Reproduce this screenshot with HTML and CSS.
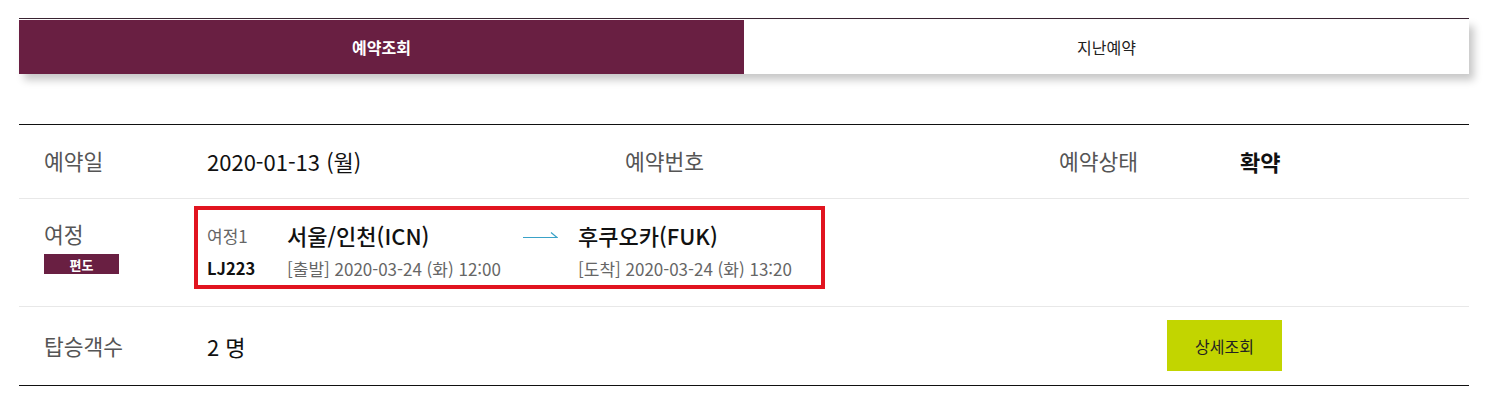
FILE: index.html
```html
<!DOCTYPE html>
<html lang="ko">
<head>
<meta charset="utf-8">
<link rel="stylesheet" href="styles.css">
</head>
<body>
<div class="page">
  <div class="tabs-wrap">
    <div class="tabs">
      <div class="tab active">예약조회</div>
      <div class="tab">지난예약</div>
    </div>
  </div>

  <div class="table">
    <div class="row row-info">
      <div class="label c1">예약일</div>
      <div class="value c2">2020-01-13 (월)</div>
      <div class="label c3">예약번호</div>
      <div class="label c4">예약상태</div>
      <div class="value strong">확약</div>
    </div>

    <div class="row row-trip">
      <div class="trip-label">
        <div class="label">여정</div>
        <div class="badge">편도</div>
      </div>
      <div class="trip-box">
        <div class="seg">여정1</div>
        <div class="city">서울/인천(ICN)</div>
        <div class="arrow">
          <svg width="35" height="10" viewBox="0 0 35 10"><path d="M0 8.5 H34 L28 3.5" fill="none" stroke="#3aa2c8" stroke-width="1.2"/></svg>
        </div>
        <div class="city">후쿠오카(FUK)</div>
        <div class="flight">LJ223</div>
        <div class="time">[출발] 2020-03-24 (화) 12:00</div>
        <div></div>
        <div class="time">[도착] 2020-03-24 (화) 13:20</div>
      </div>
    </div>

    <div class="row row-pax">
      <div class="label c1">탑승객수</div>
      <div class="value">2 명</div>
      <div class="btn">상세조회</div>
    </div>
  </div>
</div>
</body>
</html>
```

FILE: styles.css
```css
* { box-sizing: border-box; }
html, body { margin: 0; padding: 0; background: #fff; }
body {
  font-family: "Noto Sans CJK KR", "Noto Sans", sans-serif;
  color: #111;
  padding-top: 18px;
}
.page { margin-left: 19px; width: 1450px; }

.tabs-wrap {
  border-top: 1px solid #3a2432;
  padding-top: 1px;
}
.tabs {
  display: flex;
  height: 54px;
  box-shadow: 5px 6px 8px rgba(0, 0, 0, 0.22);
}
.tab {
  flex: 1;
  display: flex;
  align-items: center;
  justify-content: center;
  font-size: 16px;
  color: #222;
  background: #fff;
}
.tab.active {
  background: #691f42;
  color: #fff;
  font-weight: 700;
}

.table {
  margin-top: 50px;
  border-top: 1px solid #111;
  border-bottom: 1px solid #111;
}
.row {
  display: flex;
  align-items: center;
  border-bottom: 1px solid #e8e8e8;
}
.row:last-child { border-bottom: none; }
.label { font-size: 21.5px; color: #555; line-height: 28px; }
.value { font-size: 22px; color: #111; line-height: 28px; }
.strong { font-weight: 700; }

.row-info { height: 74px; padding-bottom: 1px; }
.c1 { width: 188px; padding-left: 25px; }
.c2 { width: 418px; }
.c3 { width: 434px; }
.c4 { width: 181px; }

.row-trip { padding: 7px 0 17px; }
.trip-label {
  width: 175px;
  padding-left: 25px;
  display: flex;
  flex-direction: column;
  align-items: flex-start;
  padding-bottom: 1px;
}
.badge {
  margin-top: 6px;
  width: 75px;
  height: 20px;
  background: #691f42;
  color: #fff;
  font-size: 13px;
  font-weight: 700;
  display: flex;
  align-items: center;
  justify-content: center;
}
.trip-box {
  width: 631px;
  height: 83px;
  border: 4px solid #e1141f;
  display: grid;
  grid-template-columns: 80px 236px 55px auto;
  grid-template-rows: 26px 22px;
  row-gap: 9px;
  padding: 12px 0 0 9px;
  align-items: center;
}
.seg { font-size: 17px; color: #666; }
.city { font-size: 22px; font-weight: 500; color: #111; }
.flight { font-size: 16.5px; font-weight: 700; color: #111; }
.time { font-size: 17px; color: #666; }
.arrow { display: flex; align-items: center; padding-bottom: 3px; }
.arrow svg { display: block; }

.row-pax { height: 78px; padding-bottom: 1px; }
.btn {
  margin-left: auto;
  margin-right: 187px;
  width: 115px;
  height: 51px;
  background: #c2d500;
  color: #222;
  font-size: 16px;
  display: flex;
  align-items: center;
  justify-content: center;
}
```
